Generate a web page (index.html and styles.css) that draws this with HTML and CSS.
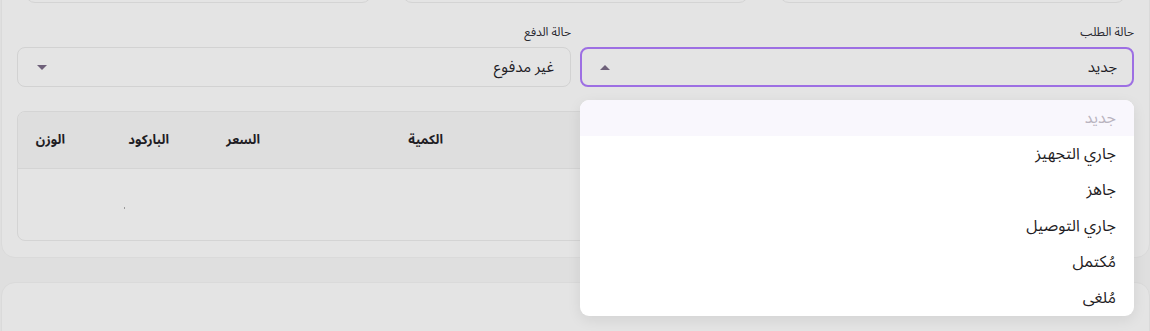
FILE: index.html
```html
<!DOCTYPE html>
<html lang="ar" dir="rtl">
<head>
  <meta charset="UTF-8" />
  <meta name="viewport" content="width=device-width, initial-scale=1.0"/>
  <title>تفاصيل الطلب</title>
  <link rel="stylesheet" href="styles.css">
</head>
<body>

<main class="page">

  <section class="card">
    <div class="stats">
      <div class="stat"></div>
      <div class="stat"></div>
      <div class="stat"></div>
    </div>

    <div class="filters">
      <div class="field">
        <label class="field-label">حالة الطلب</label>
        <div class="select-wrap">
          <div class="select open">
            <span class="select-value">جديد</span>
            <span class="caret up"></span>
          </div>
          <ul class="menu">
            <li class="menu-item selected">جديد</li>
            <li class="menu-item">جاري التجهيز</li>
            <li class="menu-item">جاهز</li>
            <li class="menu-item">جاري التوصيل</li>
            <li class="menu-item">مُكتمل</li>
            <li class="menu-item">مُلغى</li>
          </ul>
        </div>
      </div>

      <div class="field">
        <label class="field-label">حالة الدفع</label>
        <div class="select-wrap">
          <div class="select">
            <span class="select-value">غير مدفوع</span>
            <span class="caret"></span>
          </div>
        </div>
      </div>
    </div>

    <div class="table-box">
      <table class="items">
        <thead>
          <tr>
            <th></th>
            <th class="col-qty">الكمية</th>
            <th class="col-price">السعر</th>
            <th class="col-barcode">الباركود</th>
            <th class="col-weight">الوزن</th>
          </tr>
        </thead>
        <tbody>
          <tr>
            <td></td>
            <td></td>
            <td></td>
            <td class="barcode-cell"><span class="dot"></span></td>
            <td></td>
          </tr>
        </tbody>
      </table>
    </div>
  </section>

  <section class="card card-next"></section>

</main>

</body>
</html>
```

FILE: styles.css
```css
:root {
  --page-bg: #dfdfdf;
  --card-bg: #e4e4e4;
  --line: #d4d4d4;
  --head-bg: #dedede;
  --text: #222026;
  --purple: #9d6fe3;
  --caret: #6e6079;
}

* {
  box-sizing: border-box;
}

body {
  margin: 0;
  background: var(--page-bg);
  color: var(--text);
  font-family: "Noto Sans Arabic", "DejaVu Sans", "Noto Sans", sans-serif;
  overflow: hidden;
}

.page {
  margin-top: -64px;
  padding-left: 1px;
}

.card {
  background: var(--card-bg);
  border: 1px solid #dadada;
  border-radius: 14px;
  padding: 16px 15px 16px 15px;
}

.card-next {
  margin-top: 24px;
  height: 120px;
}

.stats {
  display: grid;
  grid-template-columns: repeat(3, 1fr);
  gap: 30px;
  margin: 0 8px;
}

.stat {
  height: 50px;
  border: 1px solid var(--line);
  border-radius: 10px;
}

.filters {
  display: flex;
  gap: 9px;
  margin-top: 22px;
}

.field {
  flex: 1;
}

.field-label {
  display: block;
  font-size: 12px;
  line-height: 16px;
  margin-bottom: 6px;
  color: #2a2830;
}

.select-wrap {
  position: relative;
}

.select {
  height: 40px;
  border: 1px solid #d2d2d2;
  border-radius: 8px;
  display: flex;
  align-items: center;
  justify-content: space-between;
  padding: 0 16px 0 18px;
  font-size: 15px;
}

.select.open {
  border: 2px solid var(--purple);
  padding: 0 15px 0 17px;
}

.caret {
  width: 0;
  height: 0;
  border-left: 5px solid transparent;
  border-right: 5px solid transparent;
  border-top: 5px solid var(--caret);
  margin-left: 1px;
}

.caret.up {
  border-top: none;
  border-bottom: 5px solid var(--caret);
}

.menu {
  position: absolute;
  top: 53px;
  left: 0;
  right: 0;
  margin: 0;
  padding: 0;
  list-style: none;
  background: #fff;
  border-radius: 9px;
  box-shadow: 0 4px 14px rgba(0, 0, 0, 0.08);
  overflow: hidden;
  z-index: 10;
}

.menu-item {
  height: 36px;
  line-height: 36px;
  padding: 0 18px;
  font-size: 16px;
  color: #1f1d24;
}

.menu-item.selected {
  background: #f9f7fd;
  color: #b9b4bf;
}

.table-box {
  margin-top: 24px;
  border: 1px solid var(--line);
  border-radius: 8px;
  overflow: hidden;
}

.items {
  width: 100%;
  border-collapse: collapse;
  table-layout: fixed;
}

.items th {
  background: var(--head-bg);
  height: 56px;
  text-align: right;
  font-size: 13px;
  font-weight: 700;
  padding: 0 12px;
  border-bottom: 1px solid var(--line);
  color: #1f1d24;
}

.items td {
  height: 72px;
  padding: 0 12px;
}

.col-qty { width: 183px; }
.col-price { width: 91px; }
.col-barcode { width: 104px; }
.col-weight { width: 59px; }

.barcode-cell {
  text-align: right;
}

.dot {
  display: inline-block;
  width: 1px;
  height: 2px;
  background: #9a9a9a;
  margin-right: 44px;
}
```
